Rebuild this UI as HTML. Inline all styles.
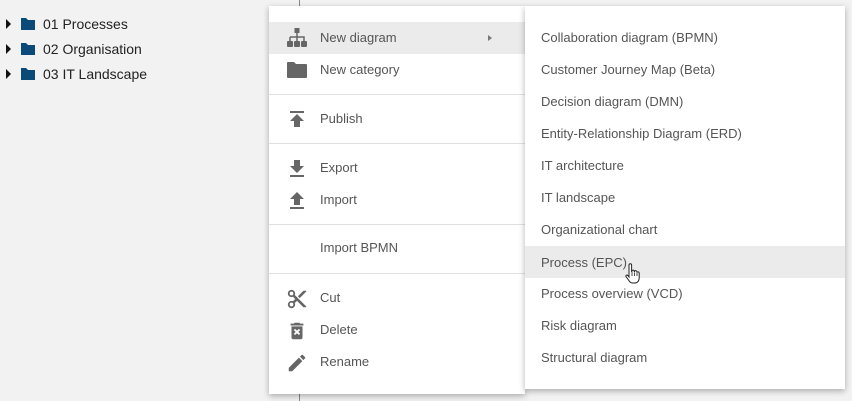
<!DOCTYPE html>
<html><head><style>
body{margin:0;width:852px;height:401px;background:#f2f2f2;font-family:"Liberation Sans",sans-serif;position:relative;overflow:hidden}
.tree{position:absolute;left:0;top:0;font-size:14px;color:#222}
.tree div{position:absolute;white-space:nowrap;height:20px;line-height:20px}
.tri{position:absolute;left:6px;width:0;height:0;border-left:5px solid #111;border-top:5px solid transparent;border-bottom:5px solid transparent;top:5px}
.fold{position:absolute;left:20px;top:3px}
.vline{position:absolute;left:299px;top:0;width:1px;height:401px;background:#888}
.menu{position:absolute;background:#fff;box-shadow:0 2px 6px rgba(0,0,0,.3)}
.it{position:absolute;left:0;right:0;height:32px;line-height:32px;font-size:13px;color:#555;white-space:nowrap}
.hl{background:#ebebeb}
.div{position:absolute;left:0;right:0;height:1px;background:#e0e0e0}
.ic{position:absolute;left:17px;top:6px}
</style></head><body>
<div class="vline"></div>
<div class="tree">
<div style="top:14px;width:200px"><span class="tri"></span><svg class="fold" width="16" height="14" viewBox="0 0 16 14"><path d="M1 1h5l2 2h7v10H1z" fill="#0b4a78"/></svg><span style="position:absolute;left:43px">01 Processes</span></div>
<div style="top:39px;width:200px"><span class="tri"></span><svg class="fold" width="16" height="14" viewBox="0 0 16 14"><path d="M1 1h5l2 2h7v10H1z" fill="#0b4a78"/></svg><span style="position:absolute;left:43px">02 Organisation</span></div>
<div style="top:64px;width:200px"><span class="tri"></span><svg class="fold" width="16" height="14" viewBox="0 0 16 14"><path d="M1 1h5l2 2h7v10H1z" fill="#0b4a78"/></svg><span style="position:absolute;left:43px">03 IT Landscape</span></div>
</div>

<div class="menu" style="left:269px;top:6px;width:256px;height:388px">
<div class="it hl" style="top:16px"><svg class="ic" width="22" height="20" viewBox="0 0 22 20"><rect x="8.5" y="0" width="5" height="5" fill="#666"/><path d="M11 5v4M4 9h14v4M4 9v4M11 9v4" stroke="#666" stroke-width="1.5" fill="none"/><rect x="1" y="13" width="6" height="6" rx="1" fill="#666"/><rect x="8" y="13" width="6" height="6" rx="1" fill="#666"/><rect x="15" y="13" width="6" height="6" rx="1" fill="#666"/></svg><span style="position:absolute;left:51px">New diagram</span><span style="position:absolute;left:219px;top:13px;border-left:4px solid #777;border-top:3px solid transparent;border-bottom:3px solid transparent"></span></div>
<div class="it" style="top:48px"><svg class="ic" width="22" height="20" viewBox="0 0 22 20"><path d="M1 3a1 1 0 0 1 1-1h6l2 2h10a1 1 0 0 1 1 1v12a1 1 0 0 1-1 1H2a1 1 0 0 1-1-1z" fill="#666"/></svg><span style="position:absolute;left:51px">New category</span></div>
<div class="div" style="top:88px"></div>
<div class="it" style="top:97px"><svg class="ic" width="22" height="20" viewBox="0 0 22 20"><rect x="4" y="2" width="14" height="2" fill="#666"/><path d="M11 5l-7 7h4v6h6v-6h4z" fill="#666"/></svg><span style="position:absolute;left:51px">Publish</span></div>
<div class="div" style="top:137px"></div>
<div class="it" style="top:146px"><svg class="ic" width="22" height="20" viewBox="0 0 22 20"><path d="M8 2h6v6h4l-7 7-7-7h4z" fill="#666"/><rect x="4" y="17" width="14" height="2" fill="#666"/></svg><span style="position:absolute;left:51px">Export</span></div>
<div class="it" style="top:178px"><svg class="ic" width="22" height="20" viewBox="0 0 22 20"><path d="M8 15h6V9h4l-7-7-7 7h4z" fill="#666"/><rect x="4" y="17" width="14" height="2" fill="#666"/></svg><span style="position:absolute;left:51px">Import</span></div>
<div class="div" style="top:218px"></div>
<div class="it" style="top:226px"><span style="position:absolute;left:51px">Import BPMN</span></div>
<div class="div" style="top:267px"></div>
<div class="it" style="top:276px"><svg class="ic" width="22" height="22" viewBox="0 0 24 24"><path d="M9.6 7.6c.3-.6.4-1.2.4-1.6a4 4 0 1 0-4 4c.6 0 1.1-.1 1.6-.4L10 12l-2.4 2.4A4 4 0 1 0 10 18c0-.6-.1-1.1-.4-1.6L12 14l7 7h3v-1zM6 8a2 2 0 1 1 0-4 2 2 0 0 1 0 4zm0 12a2 2 0 1 1 0-4 2 2 0 0 1 0 4zM19 3l-6 6 2 2 7-7V3z" fill="#666"/></svg><span style="position:absolute;left:51px">Cut</span></div>
<div class="it" style="top:308px"><svg class="ic" width="22" height="22" viewBox="0 0 24 24"><path d="M6 19a2 2 0 0 0 2 2h8a2 2 0 0 0 2-2V7H6zm2.5-7.9l1.4-1.4L12 11.6l2.1-1.9 1.4 1.4-2.1 1.9 2.1 2-1.4 1.4-2.1-2-2.1 2-1.4-1.4 2.1-2zM15.5 4l-1-1h-5l-1 1H5v2h14V4z" fill="#666"/></svg><span style="position:absolute;left:51px">Delete</span></div>
<div class="it" style="top:340px"><svg class="ic" width="22" height="22" viewBox="0 0 24 24"><path d="M3 17.3V21h3.8L17.8 9.9l-3.7-3.7zM20.7 7c.4-.4.4-1 0-1.4l-2.3-2.3c-.4-.4-1-.4-1.4 0l-1.8 1.8 3.7 3.7z" fill="#666"/></svg><span style="position:absolute;left:51px">Rename</span></div>
</div>

<div class="menu" style="left:525px;top:6px;width:320px;height:383px">
<div class="it" style="top:16px"><span style="position:absolute;left:16px">Collaboration diagram (BPMN)</span></div>
<div class="it" style="top:48px"><span style="position:absolute;left:16px">Customer Journey Map (Beta)</span></div>
<div class="it" style="top:80px"><span style="position:absolute;left:16px">Decision diagram (DMN)</span></div>
<div class="it" style="top:112px"><span style="position:absolute;left:16px">Entity-Relationship Diagram (ERD)</span></div>
<div class="it" style="top:144px"><span style="position:absolute;left:16px">IT architecture</span></div>
<div class="it" style="top:176px"><span style="position:absolute;left:16px">IT landscape</span></div>
<div class="it" style="top:208px"><span style="position:absolute;left:16px">Organizational chart</span></div>
<div class="it hl" style="top:240px"><span style="position:absolute;left:16px;top:1px">Process (EPC)</span>
<svg style="position:absolute;left:99px;top:17px" width="18" height="22" viewBox="0 0 18 22"><path d="M5 2a1.3 1.3 0 0 1 2.6 0v7l.4-1a1.2 1.2 0 0 1 2.3 0v1l.3-.6a1.2 1.2 0 0 1 2.3.4v.8a1.2 1.2 0 0 1 2.3.4v5c0 2.5-1.5 5-4.5 5H8.5c-1.5 0-2.5-.8-3.3-2L2 13.5c-.5-1 .8-2 1.8-1L5 14z" fill="#fff" stroke="#222" stroke-width="1"/><path d="M8 9v4M10.5 9.5v3.5M13 10v3" stroke="#222" stroke-width=".8"/></svg></div>
<div class="it" style="top:272px"><span style="position:absolute;left:16px">Process overview (VCD)</span></div>
<div class="it" style="top:304px"><span style="position:absolute;left:16px">Risk diagram</span></div>
<div class="it" style="top:336px"><span style="position:absolute;left:16px">Structural diagram</span></div>
</div>
</body></html>
